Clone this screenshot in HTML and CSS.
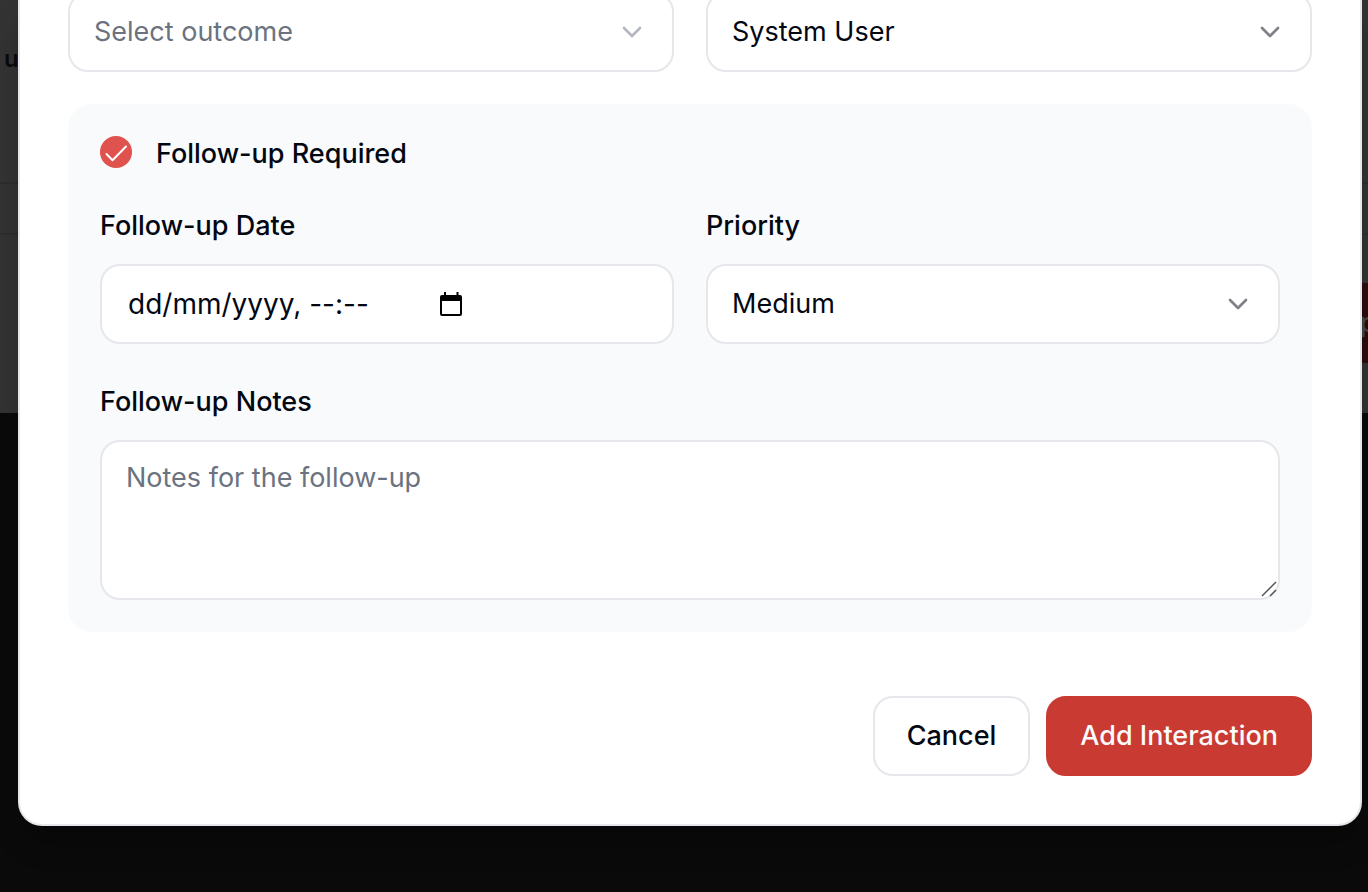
FILE: index.html
```html
<!DOCTYPE html>
<html lang="en-GB">
<head>
<meta charset="utf-8">
<meta name="viewport" content="width=device-width, initial-scale=1">
<title>Add Interaction</title>
<link rel="stylesheet" href="styles.css">
</head>
<body>
<div class="stage">
  <div class="backdrop" aria-hidden="true">
    <div class="backdrop-head"><span class="backdrop-word">u</span></div>
    <div class="backdrop-row"></div>
    <div class="backdrop-foot"><span class="backdrop-action">p</span></div>
  </div>

  <form class="dialog" role="dialog" aria-label="Add Interaction">
    <div class="columns">
      <div class="select-box is-empty">
        <select class="control select" aria-label="Outcome"><option>Select outcome</option></select>
        <svg class="chevron" viewBox="0 0 24 24"><path d="m6 9 6 6 6-6"/></svg>
      </div>
      <div class="select-box">
        <select class="control select" aria-label="Assigned to"><option>System User</option></select>
        <svg class="chevron" viewBox="0 0 24 24"><path d="m6 9 6 6 6-6"/></svg>
      </div>
    </div>

    <section class="panel">
      <div class="check-row">
        <span class="check-box">
          <input class="check" type="checkbox" id="required" checked>
          <svg class="check-mark" viewBox="0 0 32 32"><path d="M6.500 18 12.500 24.300 26 10.500"/></svg>
        </span>
        <label class="label" for="required">Follow-up Required</label>
      </div>

      <div class="columns">
        <div class="field">
          <label class="label" for="date">Follow-up Date</label>
          <div class="control date-box">
            <input class="date" id="date" type="text" placeholder="dd/mm/yyyy, --:--">
            <button class="picker" type="button" aria-label="Open calendar">
              <svg class="calendar" viewBox="0 0 22 24"><path fill-rule="evenodd" d="M4 0h2v3h10.500V0h2v3H20a2 2 0 0 1 2 2v17a2 2 0 0 1-2 2H2a2 2 0 0 1-2-2V5a2 2 0 0 1 2-2h2zM2 9v13h18V9z"/></svg>
            </button>
          </div>
        </div>
        <div class="field">
          <label class="label" for="priority">Priority</label>
          <div class="select-box">
            <select class="control select" id="priority"><option>Medium</option></select>
            <svg class="chevron" viewBox="0 0 24 24"><path d="m6 9 6 6 6-6"/></svg>
          </div>
        </div>
      </div>

      <div class="field notes-field">
        <label class="label" for="notes">Follow-up Notes</label>
        <div class="notes-box">
          <textarea class="control notes" id="notes" placeholder="Notes for the follow-up"></textarea>
          <svg class="grip" viewBox="0 0 16 16"><path d="M1 15 15 1M9 15l6-6"/></svg>
        </div>
      </div>
    </section>

    <div class="actions">
      <button class="button" type="button">Cancel</button>
      <button class="button primary" type="submit">Add Interaction</button>
    </div>
  </form>
</div>
</body>
</html>
```
FILE: styles.css
```css
* {
  box-sizing: border-box;
}

body {
  margin: 0;
  background: #0a0a0a;
  color: #030712;
  font-family: Inter, "Liberation Sans", sans-serif;
  font-size: 27px;
  line-height: 40px;
  overflow: hidden;
}

input,
select,
textarea,
button {
  font: inherit;
  color: inherit;
}

.stage {
  display: grid;
  min-height: 100vh;
}

.stage > * {
  grid-area: 1 / 1;
}

/* Dimmed page behind the dialog */
.backdrop {
  align-self: start;
  background: #333;
  color: #0a0a0d;
}

.backdrop-head {
  height: 184px;
  padding: 38px 4px;
  border-bottom: 2px solid #2d2d2e;
}

.backdrop-word {
  font-size: 24px;
  font-weight: 600;
}

.backdrop-row {
  height: 51px;
  border-bottom: 2px solid #2d2d2e;
}

.backdrop-foot {
  display: flex;
  justify-content: flex-end;
  padding: 48px 0 50px;
}

.backdrop-action {
  width: 8px;
  height: 80px;
  overflow: hidden;
  background: #2b0b0b;
  color: #4a4a4a;
  line-height: 80px;
}

.dialog {
  align-self: start;
  margin: 0 6px 0 18px;
  padding: 0 48px 48px;
  background: #fff;
  border: 2px solid #e5e7eb;
  border-top: 0;
  border-radius: 0 0 24px 24px;
  box-shadow: 0 20px 30px -6px rgba(0, 0, 0, 0.3);
}

.dialog > .columns {
  margin-top: -8px;
}

.columns {
  display: grid;
  grid-template-columns: 1fr 1fr;
  gap: 32px;
}

.control {
  width: 100%;
  height: 80px;
  margin: 0;
  padding: 0 24px;
  background: #fff;
  border: 2px solid #e5e7eb;
  border-radius: 20px;
}

.select-box,
.notes-box,
.check-box {
  display: grid;
}

.select-box > *,
.notes-box > *,
.check-box > * {
  grid-area: 1 / 1;
}

.select {
  appearance: none;
}

.is-empty {
  color: #6b7280;
}

.chevron {
  place-self: center end;
  width: 32px;
  height: 32px;
  margin-right: 26px;
  fill: none;
  stroke: currentColor;
  stroke-width: 2;
  stroke-linecap: round;
  stroke-linejoin: round;
  opacity: 0.5;
  pointer-events: none;
}

.panel {
  margin-top: 32px;
  padding: 32px;
  background: #f9fafb;
  border-radius: 24px;
}

.check-row {
  display: flex;
  gap: 24px;
  margin-bottom: 36px;
}

.check-box {
  align-self: flex-start;
}

.check {
  appearance: none;
  width: 32px;
  height: 32px;
  margin: 0;
  background: #df524d;
  border-radius: 50%;
}

.check-mark {
  width: 32px;
  height: 32px;
  fill: none;
  stroke: #fff;
  stroke-width: 2;
  stroke-linecap: round;
  stroke-linejoin: round;
  pointer-events: none;
}

.label {
  font-weight: 500;
  line-height: 36px;
}

.field {
  display: grid;
  gap: 20px;
}

.notes-field {
  margin-top: 40px;
}

.date-box {
  display: flex;
  align-items: center;
}

.date {
  width: 314px;
  padding: 0 2px;
  background: none;
  border: 0;
  font-size: 28px;
}

.date::placeholder {
  color: #030712;
  opacity: 1;
}

.picker {
  display: flex;
  padding: 0;
  background: none;
  border: 0;
}

.calendar {
  width: 22px;
  height: 24px;
  fill: #000;
}

.notes {
  height: 160px;
  padding: 16px 24px;
  resize: none;
}

.notes::placeholder {
  color: #6b7280;
}

.grip {
  place-self: end;
  width: 16px;
  height: 16px;
  margin: 3px;
  fill: none;
  stroke: #555;
  stroke-width: 1.5;
  pointer-events: none;
}

.actions {
  display: flex;
  justify-content: flex-end;
  gap: 16px;
  margin-top: 64px;
}

.button {
  height: 80px;
  padding: 0 32px;
  background: #fff;
  border: 2px solid #e5e7eb;
  border-radius: 20px;
  font-weight: 500;
}

.primary {
  background: #c93a32;
  border-color: #c93a32;
  color: #f9fafb;
}
```
